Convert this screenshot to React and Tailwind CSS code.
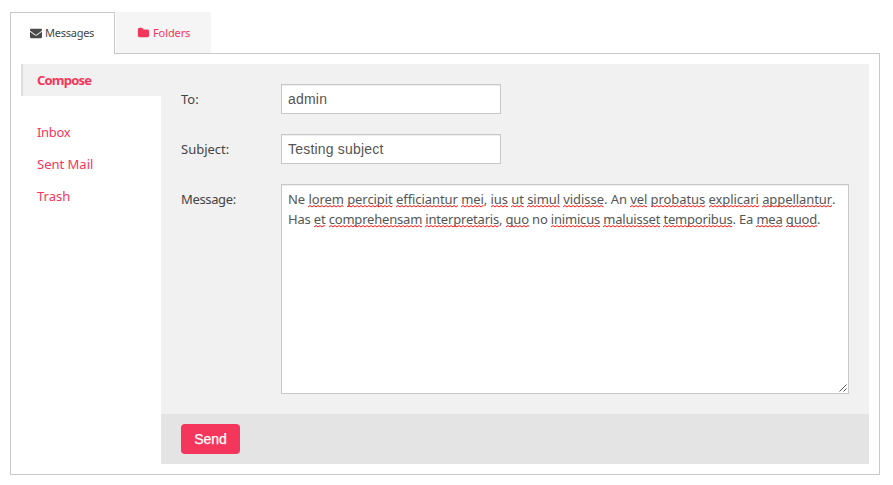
import React from "react";

const lines = [
  ["Ne *lorem *percipit *efficiantur *mei, *ius *ut *simul *vidisse. An *vel *probatus *explicari *appellantur.", "tracking-[-0.07px]"],
  ["Has *et *comprehensam *interpretaris, *quo no *inimicus *maluisset *temporibus. Ea *mea *quod.", "tracking-[-0.19px]"],
];

function Squiggle() {
  return (
    <svg className="absolute left-0 top-4 h-[3px] w-full overflow-hidden" aria-hidden="true">
      <defs>
        <pattern id="wave" width="4" height="3" patternUnits="userSpaceOnUse">
          <path d="M-1 1 L0 2 L2 0.5 L4 2 L5 1" fill="none" stroke="#ff1414" strokeWidth="1" />
        </pattern>
      </defs>
      <rect width="100%" height="3" fill="url(#wave)" />
    </svg>
  );
}

function Line({ text, tracking }) {
  return (
    <div className={"whitespace-nowrap " + tracking}>
      {text.split(" ").map((w, i) => {
        if (!w.startsWith("*")) return <span key={i}>{w} </span>;
        const m = w.slice(1).match(/^(\w+)(.*)$/);
        return (
          <span key={i}>
            <span className="relative inline-block">
              {m[1]}
              <Squiggle />
            </span>
            {m[2]}{" "}
          </span>
        );
      })}
    </div>
  );
}

const field = "border border-[#c8c8c8] bg-white px-1.5 text-[#555] shadow-[inset_0_1px_1px_rgba(0,0,0,0.07)]";
const input = "h-[30px] w-[220px] pt-1 font-['Liberation_Sans',sans-serif] text-sm tracking-[0.2px] ";

export default function App() {
  return (
    <div className="h-[485px] w-[893px] bg-white pl-2.5 pt-3 font-['Noto_Sans',sans-serif] text-[13px] leading-5 text-[#444]">
      <div className="flex h-[42px] items-start text-[11px] tracking-[-0.25px]">
        <div className="relative z-10 flex h-[42px] w-[105px] items-center gap-[3px] border border-b-0 border-[#c8c8c8] bg-white pb-0.5 pl-[19px] text-[#444]">
          <svg width="12" height="12" viewBox="0 0 1792 1792" fill="#4a4a4a">
            <path d="M1792 710v794q0 66-47 113t-113 47h-1472q-66 0-113-47t-47-113v-794q44 49 101 87 362 246 497 345 57 42 92.5 65.5t94.5 48 110 24.5h2q51 0 110-24.5t94.5-48 92.5-65.5q170-123 498-345 57-39 100-87zm0-294q0 79-49 151t-122 123q-376 261-468 325-10 7-42.5 31t-54 38.5-52 32.5-57.5 27-50 9h-2q-23 0-50-9t-57.5-27-52-32.5-54-38.5-42.5-31q-91-64-262-182.5t-205-142.5q-62-42-117-115.5t-55-136.5q0-78 41.5-130t118.5-52h1472q65 0 112.5 47t47.5 113z" />
          </svg>
          <span>Messages</span>
        </div>
        <div className="ml-px flex h-[41px] w-[95px] items-center gap-[3px] bg-[#f5f5f5] pl-[21px] text-[#f5365c]">
          <svg width="13" height="12" viewBox="0 0 1792 1792" fill="#f5365c">
            <path d="M1728 608v704q0 92-66 158t-158 66h-1216q-92 0-158-66t-66-158v-960q0-92 66-158t158-66h320q92 0 158 66t66 158v32h672q92 0 158 66t66 158z" />
          </svg>
          <span className="tracking-[-0.1px]">Folders</span>
        </div>
      </div>
      <div className="-mt-px flex h-[422px] w-[870px] border border-[#c8c8c8] p-2.5">
        <nav className="w-[140px] text-[#f5365c]">
          <div className="mb-5 h-8 border-l-2 border-[#ddd] bg-[#f1f1f1] pl-3.5 pt-1.5 font-bold tracking-[-0.8px]">Compose</div>
          <div className="h-8 pl-4 pt-1.5 tracking-[-0.3px]">Inbox</div>
          <div className="h-8 pl-4 pt-1.5">Sent Mail</div>
          <div className="h-8 pl-4 pt-1.5">Trash</div>
        </nav>
        <main className="flex w-[708px] flex-col bg-[#f1f1f1]">
          <div className="flex h-[350px] flex-col gap-5 px-5 pt-5">
            <div className="flex">
              <label className="w-[100px] pt-[5px]">To:</label>
              <div className={input + field}>admin</div>
            </div>
            <div className="flex">
              <label className="w-[100px] pt-[5px]">Subject:</label>
              <div className={input + field}>Testing subject</div>
            </div>
            <div className="flex">
              <label className="w-[100px] pt-[5px] tracking-[-0.35px]">Message:</label>
              <div className={"relative h-[210px] w-[568px] pt-1 " + field}>
                {lines.map(([t, k]) => <Line key={t} text={t} tracking={k} />)}
                <svg className="absolute bottom-px right-px" width="8" height="8" viewBox="0 0 8 8" stroke="#555" strokeWidth="1">
                  <path d="M0.5 7.5L7.5 0.5M4.5 7.5L7.5 4.5" />
                </svg>
              </div>
            </div>
          </div>
          <div className="h-[50px] bg-[#e4e4e4] pl-5 pt-2.5">
            <button className="h-[30px] w-[59px] rounded bg-[#f5365c] font-['Liberation_Sans',sans-serif] text-sm text-white [-webkit-text-stroke:0.25px_white]">Send</button>
          </div>
        </main>
      </div>
    </div>
  );
}
